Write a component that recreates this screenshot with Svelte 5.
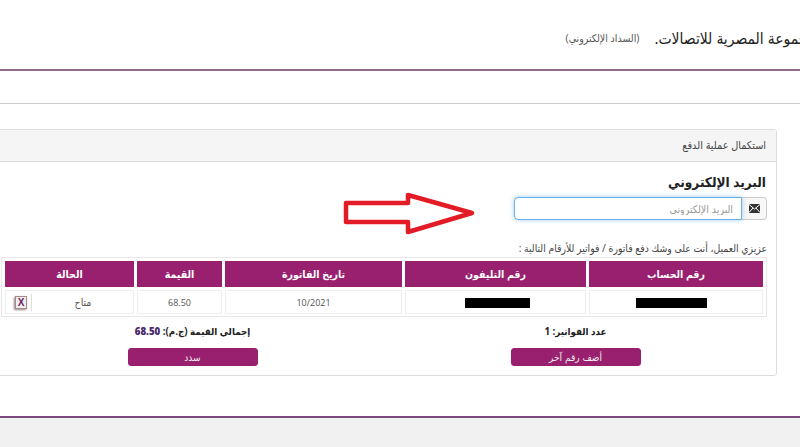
<script>
  const rows = [{ status: 'متاح', amount: '68.50', date: '10/2021' }];
</script>

<div class="page">
  <header class="top">
    <h1>المجموعة المصرية للاتصالات.</h1>
    <small>(السداد الإلكتروني)</small>
  </header>
  <div class="rule"></div>

  <section class="card">
    <div class="card-head">استكمال عملية الدفع</div>
    <div class="card-body">
      <h2>البريد الإلكتروني</h2>
      <div class="email">
        <span class="addon">
          <svg width="11" height="9" viewBox="0 0 11 9">
            <rect width="11" height="9" fill="#333" />
            <path d="M0 .5 5.5 5 11 .5M0 8.5 4 4M11 8.5 7 4" fill="none" stroke="#fff" stroke-width="1" />
          </svg>
        </span>
        <input type="text" placeholder="البريد الإلكتروني" />
      </div>

      <p class="note">عزيزي العميل، أنت على وشك دفع فاتورة / فواتير للأرقام التالية :</p>

      <div class="table-wrap">
        <table>
          <thead>
            <tr>
              <th class="c-acc">رقم الحساب</th>
              <th class="c-tel">رقم التليفون</th>
              <th class="c-date">تاريخ الفاتورة</th>
              <th class="c-amt">القيمة</th>
              <th class="c-st">الحالة</th>
            </tr>
          </thead>
          <tbody>
            {#each rows as row}
              <tr>
                <td><span class="mask acc"></span></td>
                <td><span class="mask tel"></span></td>
                <td>{row.date}</td>
                <td>{row.amount}</td>
                <td class="status">
                  <span class="status-text">{row.status}</span>
                  <span class="check">
                    <span class="box">X</span>
                  </span>
                </td>
              </tr>
            {/each}
          </tbody>
        </table>
      </div>

      <div class="totals">
        <div class="col">
          <strong>عدد الفواتير: 1</strong>
          <button type="button">أضف رقم آخر</button>
        </div>
        <div class="col">
          <strong>إجمالي القيمة (ج.م): <b>68.50</b></strong>
          <button type="button">سدد</button>
        </div>
      </div>
    </div>
  </section>

  <svg class="arrow" width="134" height="44" viewBox="0 0 134 44">
    <path d="M3 11H65V3L129 21 65 40V30H3Z" fill="#fff" stroke="#e21b26" stroke-width="4.5" stroke-linejoin="round" />
  </svg>

  <footer class="foot"></footer>
</div>

<style>
  :global(body) {
    background: #fff;
  }
  .page {
    position: relative;
    width: 800px;
    height: 447px;
    overflow: hidden;
    direction: rtl;
    font-family: "Open Sans", "DejaVu Sans Condensed", "DejaVu Sans", sans-serif;
    color: #333;
    display: flex;
    flex-direction: column;
  }
  .top {
    height: 69px;
    flex: none;
    display: flex;
    align-items: center;
    gap: 15px;
    padding-top: 6px;
    box-sizing: border-box;
    margin-right: -24px;
    white-space: nowrap;
  }
  h1 {
    margin: 0;
    font-size: 15.5px;
    font-weight: 400;
    color: #222;
  }
  small {
    font-size: 10.5px;
    color: #555;
  }
  .rule {
    flex: none;
    height: 35px;
    box-sizing: border-box;
    border-top: 2px solid #8f6b8c;
    border-bottom: 1px solid #ccc;
    margin-bottom: 25px;
  }
  .card {
    flex: none;
    box-sizing: border-box;
    width: 810px;
    height: 247px;
    margin-right: 23px;
    border: 1px solid #ddd;
    border-radius: 3px;
  }
  .card-head {
    height: 31px;
    background: #f5f5f5;
    border-bottom: 1px solid #ddd;
    padding-right: 10px;
    font-size: 10.8px;
    line-height: 30px;
    color: #444;
  }
  .card-body {
    padding: 10px 9px 0 0;
  }
  h2 {
    margin: 0 1px 0 0;
    font-size: 13.5px;
    line-height: 20px;
    font-weight: 700;
    color: #222;
  }
  .email {
    display: flex;
    width: 253px;
    height: 23px;
    margin-top: 5px;
  }
  .addon {
    width: 25px;
    box-sizing: border-box;
    display: flex;
    align-items: center;
    justify-content: center;
    background: #f7f7f7;
    border: 1px solid #ccc;
    border-left: 0;
    border-radius: 0 4px 4px 0;
  }
  input {
    flex: 1;
    min-width: 0;
    box-sizing: border-box;
    border: 1px solid #66afe9;
    border-radius: 4px 0 0 4px;
    box-shadow: 0 0 5px rgba(102, 175, 233, 0.6);
    padding: 0 8px;
    outline: 0;
    direction: rtl;
    font: 10.5px "DejaVu Sans Condensed", "DejaVu Sans", sans-serif;
  }
  input::placeholder {
    color: #999;
  }
  .note {
    margin: 21px 0 0;
    font-size: 10.35px;
    line-height: 14px;
    color: #444;
  }
  .table-wrap {
    width: 766px;
    height: 60px;
    box-sizing: border-box;
    margin-top: 2px;
    border: 1px solid #e8e8e8;
  }
  table {
    width: 100%;
    table-layout: fixed;
    border-collapse: separate;
    border-spacing: 3px;
  }
  .c-acc {
    width: 174px;
  }
  .c-tel {
    width: 181px;
  }
  .c-date {
    width: 177px;
  }
  .c-amt {
    width: 85px;
  }
  th {
    height: 26px;
    padding: 0;
    background: #98206f;
    color: #fff;
    font-size: 10.5px;
    font-weight: 700;
  }
  td {
    height: 24px;
    padding: 0;
    text-align: center;
    font-size: 9px;
    color: #555;
    border: 1px solid #eee;
    box-sizing: border-box;
  }
  .mask {
    display: inline-block;
    height: 10px;
    background: #000;
    vertical-align: middle;
  }
  .acc {
    width: 71px;
    margin-right: 9px;
  }
  .tel {
    width: 65px;
    margin-left: 4px;
  }
  .status {
    position: relative;
    padding-left: 27px;
  }
  .status-text {
    font-size: 10.5px;
  }
  .check {
    position: absolute;
    left: 0;
    top: 3px;
    width: 26px;
    height: 17px;
    box-sizing: border-box;
    padding-left: 5px;
    display: flex;
    justify-content: center;
    align-items: center;
    border-right: 1px solid #ddd;
  }
  .box {
    width: 10px;
    height: 11px;
    font: 700 10px/11px "Liberation Sans", sans-serif;
    color: #6d2160;
    background: #eee;
    border: 1px solid #a88;
    box-shadow: -1px 1px 2px #888;
  }
  .totals {
    display: flex;
    margin-top: 8px;
    width: 766px;
  }
  .col {
    flex: 1;
    display: flex;
    flex-direction: column;
    align-items: center;
    gap: 9px;
  }
  strong {
    font-size: 9.7px;
    line-height: 14px;
    color: #222;
  }
  b {
    color: #4b2a6b;
  }
  button {
    width: 130px;
    height: 18px;
    padding: 0;
    border: 1px solid #98206f;
    border-radius: 3px;
    background: #98206f;
    color: #eee;
    font: 10px "DejaVu Sans Condensed", "DejaVu Sans", sans-serif;
  }
  .arrow {
    position: absolute;
    left: 343px;
    top: 192px;
  }
  .foot {
    position: absolute;
    left: 0;
    right: 0;
    top: 416px;
    bottom: 0;
    background: #f1f1f1;
    border-top: 2px solid #7b4a7b;
  }
</style>
